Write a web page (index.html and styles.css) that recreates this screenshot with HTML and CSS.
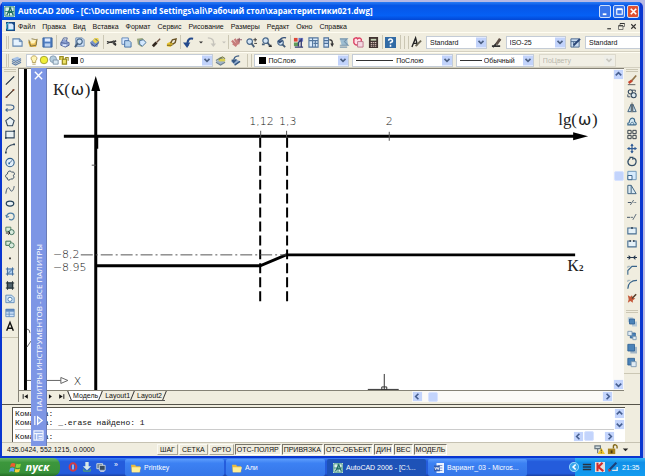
FILE: index.html
```html
<!DOCTYPE html>
<html lang="ru">
<head>
<meta charset="utf-8">
<title>AutoCAD 2006</title>
<link rel="stylesheet" href="styles.css">
</head>
<body>
<div class="window">
  <header class="titlebar">
    <span class="app-icon" data-icon="acad"></span>
    <h1>AutoCAD 2006 - [C:\Documents and Settings\ali\Рабочий стол\характеристики021.dwg]</h1>
    <button class="win-btn" aria-label="Свернуть" data-icon="min"></button>
    <button class="win-btn" aria-label="Развернуть" data-icon="max"></button>
    <button class="win-btn close" aria-label="Закрыть" data-icon="close"></button>
  </header>
  <nav class="menubar">
    <span class="doc-icon" data-icon="doc"></span>
    <button>Файл</button><button>Правка</button><button>Вид</button><button>Вставка</button><button>Формат</button><button>Сервис</button><button>Рисование</button><button>Размеры</button><button>Редакт</button><button>Окно</button><button>Справка</button>
    <span class="spacer"></span>
    <button class="mdi" aria-label="Свернуть документ" data-icon="mdimin"></button>
    <button class="mdi" aria-label="Восстановить документ" data-icon="mdimax"></button>
    <button class="mdi" aria-label="Закрыть документ" data-icon="mdiclose"></button>
  </nav>

  <div class="toolbar standard">
    <i class="grip"></i>
    <div class="tools">
      <button aria-label="Создать" data-icon="new"></button><button aria-label="Открыть" data-icon="open"></button><button aria-label="Сохранить" data-icon="save"></button>
      <i class="sep"></i>
      <button aria-label="Печать" data-icon="print"></button><button aria-label="Просмотр" data-icon="preview"></button><button aria-label="Публикация" data-icon="publish"></button>
      <i class="sep"></i>
      <button aria-label="Вырезать" data-icon="cut"></button><button aria-label="Копировать" data-icon="copy"></button><button aria-label="Вставить" data-icon="paste"></button><button aria-label="Свойства" data-icon="brush"></button><button aria-label="Редактор блоков" data-icon="match"></button>
      <i class="sep"></i>
      <button aria-label="Отменить" data-icon="undo"></button><button class="slim" aria-label="Список отмены" data-icon="drop"></button><button aria-label="Вернуть" data-icon="redo" disabled></button><button class="slim" aria-label="Список возврата" data-icon="dropoff" disabled></button>
      <i class="sep"></i>
      <button aria-label="Панорамирование" data-icon="pan"></button><button aria-label="Зумирование" data-icon="zoompm"></button><button aria-label="Рамка" data-icon="zoomwin"></button><button aria-label="Предыдущий" data-icon="zoomprev"></button>
      <i class="sep"></i>
      <button aria-label="Окно свойств" data-icon="props"></button><button aria-label="Центр управления" data-icon="center"></button><button aria-label="Палитры" data-icon="palettes"></button><button aria-label="Подшивки" data-icon="sheets"></button><button aria-label="Пометки" data-icon="markup"></button><button aria-label="Калькулятор" data-icon="calc"></button>
      <i class="sep"></i>
      <button aria-label="Справка" data-icon="help"></button>
    </div>
    <i class="sep"></i>
    <i class="grip double"></i>
    <div class="styles">
      <span class="style-icon" data-icon="textstyle"></span>
      <label class="combo"><select aria-label="Стиль текста"><option>Standard</option></select><b data-icon="arrow"></b></label>
      <span class="style-icon" data-icon="dimstyle"></span>
      <label class="combo"><select aria-label="Размерный стиль"><option>ISO-25</option></select><b data-icon="arrow"></b></label>
      <span class="style-icon" data-icon="tablestyle"></span>
      <label class="combo last"><select aria-label="Стиль таблиц"><option>Standard</option></select></label>
    </div>
  </div>

  <div class="toolbar layers">
    <i class="grip"></i>
    <button aria-label="Слои" data-icon="layers"></button>
    <label class="combo layer"><select aria-label="Слой"><option>0</option></select>
      <span class="layer-state"><i data-icon="bulb"></i><i data-icon="sun"></i><i data-icon="freeze"></i><i data-icon="lock"></i><i class="swatch"></i></span><b data-icon="arrow"></b></label>
    <button aria-label="Сделать текущим" data-icon="layercur"></button>
    <button aria-label="Предыдущее состояние" data-icon="layerprev"></button>
    <i class="grip double"></i>
    <label class="combo color"><select aria-label="Цвет"><option>ПоСлою</option></select><span class="layer-state"><i class="swatch"></i></span><b data-icon="arrow"></b></label>
    <label class="combo ltype"><select aria-label="Тип линии"><option>ПоСлою</option></select><span class="line"></span><b data-icon="arrow"></b></label>
    <label class="combo weight"><select aria-label="Вес линии"><option>Обычный</option></select><span class="line short"></span><b data-icon="arrow"></b></label>
    <label class="combo plot"><select aria-label="Стиль печати" disabled><option>ПоЦвету</option></select><b data-icon="arrowoff"></b></label>
  </div>

  <main class="workspace">
    <aside class="side">
      <i class="grip flat"></i>
      <button aria-label="Отрезок" data-icon="line"></button><button aria-label="Прямая" data-icon="xline"></button><button aria-label="Полилиния" data-icon="pline"></button><button aria-label="Многоугольник" data-icon="polygon"></button><button aria-label="Прямоугольник" data-icon="rect"></button><button aria-label="Дуга" data-icon="arc"></button><button aria-label="Круг" data-icon="circle"></button><button aria-label="Облако" data-icon="cloud"></button><button aria-label="Сплайн" data-icon="spline"></button><button aria-label="Эллипс" data-icon="ellipse"></button><button aria-label="Эллиптическая дуга" data-icon="earc"></button><button aria-label="Вставить блок" data-icon="insert"></button><button aria-label="Создать блок" data-icon="block"></button><button aria-label="Точка" data-icon="point"></button><button aria-label="Штриховка" data-icon="hatch"></button><button aria-label="Градиент" data-icon="gradient"></button><button aria-label="Область" data-icon="region"></button><button aria-label="Таблица" data-icon="table"></button><button aria-label="Текст" data-icon="mtext"></button>
    </aside>
    <section class="document">
      <div class="view">
        <svg class="drawing" viewBox="19 69 596 321" preserveAspectRatio="xMinYMin meet" role="img" aria-label="График K(ω) от lg(ω)">
          <path d="M25.500 69V391" stroke="#000" stroke-width="3"/>
          <g stroke="#000" fill="none">
            <path d="M96 90V392M64 136.500H578" stroke-width="3"/>
            <path d="M97.500 137V149" stroke-width="2"/>
            <path d="M97 266.500H261L287 255.500H577" stroke-width="3"/>
            <path d="M261 138V303M288 138V303" stroke-width="2" stroke-dasharray="10 4"/>
            <path d="M81 255.500H287" stroke="#555" stroke-dasharray="12 3 2 3"/>
            <path d="M261.500 131V137M287.500 131V137M390.500 132V141M92 165.500H96" stroke="#555"/>
            <path d="M385.500 375V391M369 390.500H400" stroke="#333"/>
            <path d="M383 388h5v3h-5z" stroke="#333"/>
            <path d="M27 381.500H61M61 378.500L68 381.500L61 384.500ZM27 330q3 0 3 4M27 348l4-6" stroke="#666"/>
          </g>
          <path d="M96 76l4.500 15h-9zM590 136.500l-15 4v-8z"/>
          <g class="serif"><text x="53" y="95">К(</text><text x="71" y="95" class="omega">ω</text><text x="85" y="95">)</text><text x="560" y="125">lg(</text><text x="580" y="125" class="omega">ω</text><text x="594" y="125">)</text><text x="569" y="272">К</text><text x="581" y="272" class="sub">2</text></g>
          <g class="cad"><text x="250" y="125">1,12</text><text x="280" y="125">1,3</text><text x="387" y="125">2</text><text x="53" y="259">−8,2</text><text x="53" y="272">−8.95</text><text x="74" y="386">X</text></g>
        </svg>
        <div class="vscroll"><button aria-label="Вверх" data-icon="up"></button><i class="thumb"></i><button aria-label="Вниз" data-icon="down"></button></div>
      </div>
      <div class="tabs">
        <button aria-label="Первый" data-icon="first"></button><button class="mid" aria-label="Назад" data-icon="last"></button><button aria-label="Вперед" data-icon="next"></button><button aria-label="Последний" data-icon="last"></button>
        <button class="tab active">Модель</button><button class="tab">Layout1</button><button class="tab">Layout2</button>
        <span class="spacer"></span>
        <div class="hscroll"><button aria-label="Влево" data-icon="left"></button><i class="thumb"></i><span class="spacer"></span><button aria-label="Вправо" data-icon="right"></button></div>
      </div>
    </section>
    <aside class="side right">
      <i class="grip flat"></i>
      <button aria-label="Стереть" data-icon="erase"></button><button aria-label="Копировать объект" data-icon="mcopy"></button><button aria-label="Зеркало" data-icon="mirror"></button><button aria-label="Подобие" data-icon="offset"></button><button aria-label="Массив" data-icon="array"></button><button aria-label="Перенести" data-icon="move"></button><button aria-label="Повернуть" data-icon="rotate"></button><button aria-label="Масштаб" data-icon="scale"></button><button aria-label="Растянуть" data-icon="stretch"></button><button aria-label="Обрезать" data-icon="trim"></button><button aria-label="Удлинить" data-icon="extend"></button><button aria-label="Разорвать в точке" data-icon="breakpt"></button><button aria-label="Разорвать" data-icon="break"></button><button aria-label="Соединить" data-icon="join"></button><button aria-label="Фаска" data-icon="chamfer"></button><button aria-label="Сопряжение" data-icon="fillet"></button><button aria-label="Расчленить" data-icon="explode"></button>
      <i class="grip flat order"></i>
      <button aria-label="На передний план" data-icon="front"></button><button aria-label="На задний план" data-icon="back"></button><button aria-label="Перед объектом" data-icon="above"></button><button aria-label="За объектом" data-icon="under"></button>
    </aside>
  </main>

  <section class="command">
    <div class="log">
      <p>Команда:</p>
      <p>Команда: _.erase найдено: 1</p>
      <label class="prompt">Команда:<input type="text" aria-label="Командная строка"></label>
    </div>
    <div class="cmd-scroll">
      <button aria-label="Вверх" data-icon="up"></button><button aria-label="Вниз" data-icon="down"></button>
      <div class="cmd-h"><button aria-label="Влево" data-icon="left"></button><i class="thumb"></i><span class="spacer"></span><button aria-label="Вправо" data-icon="right"></button></div>
    </div>
  </section>

  <footer class="status">
    <output>435.0424, 552.1215, 0.0000</output>
    <button>ШАГ</button><button>СЕТКА</button><button>ОРТО</button><button class="on">ОТС-ПОЛЯР</button><button class="on">ПРИВЯЗКА</button><button class="on">ОТС-ОБЪЕКТ</button><button class="on">ДИН</button><button class="on">ВЕС</button><button class="on">МОДЕЛЬ</button>
    <span class="spacer"></span>
    <span class="tray-icons"><i data-icon="warn"></i><i data-icon="padlock"></i><i data-icon="menuarrow"></i></span>
  </footer>

  <section class="palette" aria-label="Палитры инструментов">
    <button aria-label="Закрыть палитру" data-icon="palclose"></button>
    <h2>ПАЛИТРЫ ИНСТРУМЕНТОВ - ВСЕ ПАЛИТРЫ</h2>
    <button aria-label="Автоскрытие" data-icon="autohide"></button>
    <button aria-label="Свойства палитры" data-icon="palprops"></button>
  </section>
</div>

<nav class="taskbar">
  <button class="start"><i data-icon="flag"></i>пуск</button>
  <div class="quick"><button aria-label="Opera" data-icon="opera"></button><button aria-label="Загрузки" data-icon="dl"></button><button aria-label="Рабочий стол" data-icon="desk"></button><span>»</span></div>
  <button class="task"><i data-icon="folder"></i>Printkey</button>
  <button class="task"><i data-icon="folder"></i>Али</button>
  <button class="task current"><i data-icon="acad"></i>AutoCAD 2006 - [C:\...</button>
  <button class="task"><i data-icon="word"></i>Вариант_03 - Micros...</button>
  <div class="tray"><i data-icon="expand"></i><i data-icon="kbd"></i><i data-icon="kav"></i><i data-icon="pen"></i><time>21:35</time></div>
</nav>
<script src="icons.js"></script>
</body>
</html>
```
FILE: icons.js
```js
// Icon artwork on a 12x12 grid, injected into every [data-icon] element.
const s = (d, c = '#26394f', w = 1, f = 'none') =>
  `<path d="${d}" fill="${f}" stroke="${c}" stroke-width="${w}"/>`;
const f = (d, c) => `<path d="${d}" fill="${c}"/>`;
const scrollBox = f('M1 1h10v10H1z', '#c3d4fc');
const lens = (x, y) => `<circle cx="${x}" cy="${y}" r="3" fill="#d3e4f4" stroke="#4b6a8c" stroke-width="1.300"/>`;

const icons = {
  acad: f('M0 0h12v12H0z', '#dff1ea') + s('M1 1h10v10H1zM1 6h10M6 1v10', '#2c8576') + s('M3 10L7 2l3 8M4 7h5', '#1d6b60', 1.4),
  doc: f('M0 0h12v12H0z', '#174a87') + f('M3 2h5l2 2v6H3z', '#d9ecff') + s('M1 9V3l3-2M2 10h6', '#4fc3d9', 1.5),
  min: s('M3 9h4', '#fff', 2),
  max: s('M3 3.500h6v5.500H3z', '#fff', 1.2) + s('M3 3.500h6', '#fff', 2),
  close: s('M3 3l6 6M9 3l-6 6', '#fff', 1.8),
  mdimin: s('M3 9h5', '#333', 1.5),
  mdimax: s('M4 5V2h6v4H8M2 5h6v5H2z', '#555') + s('M2 5h6M4 2h6', '#333', 1.5),
  mdiclose: s('M3 3l6 6M9 3l-6 6', '#333', 1.5),
  new: s('M1 2h7l3 3v5H1z', '#6286b0', 1.2, '#e6f3ff') + s('M8 2v3h3', '#6286b0'),
  open: f('M1 5h7l3-3-1 9H3z', '#e8bd55') + s('M2 3l2 7 6-1 1-7M5 2l5 1', '#7b6c38') + f('M5 3h5l-2 4H4z', '#fff3bb'),
  save: f('M1 1h10v10H1z', '#4d7cc0') + f('M3 1h6v4H3z', '#dceaff') + f('M3 7h6v4H3z', '#bcd3f1') + s('M1 1h10v10H1z', '#38639e'),
  print: f('M2 5l4-3 4 3 1 4-4 2-5-2z', '#91a5d4') + s('M3 5l2-4h4l-1 4M2 6v3l5 2 4-2V6L7 7z', '#495f98') + f('M4 8h4v2H4z', '#dce8ff'),
  preview: s('M2 1h7l2 2v7H2z', '#6486b0', 1, '#dcecff') + lens(6, 5) + s('M4 7L1 11', '#475e78', 2),
  publish: f('M1 6l5-4 5 3-2 6-6-1z', '#7892c8') + f('M6 1h4l1 3-4 3-3-3z', '#ecd555') + s('M2 7l4 3 5-4M7 2l3 3', '#3e5278'),
  cut: s('M1 5l10 2M1 7l8-3', '#333', 1.2) + s('M8 6l3-2M8 7l3 2', '#333', 1.8),
  copy: s('M1 1h7v7H1z', '#5e83b8', 1, '#dbeaff') + s('M4 4h5l2 2v5H4z', '#3e6ba3', 1, '#b8d4ee'),
  paste: f('M1 2l6-1 4 5-5 5-4-3z', '#9aa67e') + s('M4 4l4-1 3 3-4 4-3-2z', '#4c749f', 1, '#d4e9ff'),
  brush: s('M2 10l4-4', '#31271f', 3) + s('M6 6l4-4', '#6c5141', 1.5),
  match: f('M1 7l4-2 3 2-3 4-4-1z', '#e8c430') + s('M5 7l2-4 4-1-1 4-3 2', '#695325', 1.5) + s('M1 9h6', '#6a5720'),
  undo: s('M11 2C7 1 4 3 5 10', '#244a8c', 2.2) + f('M0 6h8l-3.500 6z', '#244a8c'),
  redo: s('M2 1c6 0 7 4 6 8', '#c6c4bc', 1.5) + f('M5 7h6l-3 4z', '#c6c4bc'),
  drop: f('M2 5h8l-4 4z', '#333'), dropoff: f('M2 5h8l-4 4z', '#c6c4bc'),
  pan: s('M1 4l5 5M4 2l4 6M2 7l4 3M8 2v6', '#c77d7b', 2.5) + s('M9 1v5M7 3h5', '#8b5867'),
  zoompm: lens(4, 5) + s('M6 7l3 4', '#475e78', 2) + s('M8 3h4M10 1v4M9 7h3', '#333'),
  zoomwin: lens(5, 4) + s('M7 6l3 4M1 8h3', '#475e78', 2) + f('M8 11h4l-1-3z', '#333'),
  zoomprev: lens(5, 6) + s('M7 8l3 3', '#475e78', 2) + s('M11 1C7 0 4 2 4 5M2 4l2 2 3-2', '#344f77', 1.5),
  props: f('M1 1h4v4H1z', '#dc4638') + f('M6 1h5v4H6z', '#6b76c4') + f('M1 6h5v4H1z', '#5f9a59') + s('M6 10V6l3-3v8M2 11h9', '#333c75', 1.5),
  center: s('M1 1h10v10H1zM5 1v10M1 4h10M6 7h5M8 4v7', '#54779e', 1.2, '#dcecfb'),
  palettes: s('M1 1h5v10H1zM1 4h5M1 7h5', '#4d719a', 1.2, '#d3e5fa') + s('M7 3c4 0 3 3 3 5', '#333', 1.5) + f('M8 7h4l-2 4z', '#333'),
  sheets: f('M2 2h8l1 7H4z', '#9ebdd1') + s('M2 2h8l-3 3 4 4H2M2 11h8', '#7896ad', 1.2),
  markup: s('M1 4c-1-3 3-4 4-2 2-2 5 0 4 2 1 3-1 5-3 4-3 2-6-1-5-4z', '#dc4264', 1.5, '#ffe1e8') + s('M5 5h6v6H5z', '#bc7288', 1, '#f5d8e2'),
  calc: f('M1 0h10v12H1z', '#423431') + f('M3 2h6v2H3z', '#c7d4b6') + s('M3 6h6M3 8h6M3 10h6', '#f1d6d0', 1) + s('M5 5v6M7 5v6', '#423431', .8),
  help: f('M0 0h12v12H0z', '#326ba5') + s('M4 4c0-3 5-2 4 1L6 6v1M6 8.500v2', '#fff', 1.7),
  textstyle: s('M1 11L5 1l2 8M3 7h4', '#222', 1.5) + s('M5 10l6-6', '#6a6552', 2),
  dimstyle: s('M1 10h9M2 11l8-8', '#333', 1.8) + s('M6 8l4-6', '#5e5047', 3),
  tablestyle: s('M1 2h9v9H1zM1 5h9M4 5v6', '#49688f', 1, '#c9dcef') + s('M4 9l7-7', '#294575', 2),
  arrow: f('M0 0h12v12H0z', '#c2d3fb') + s('M3 4l3 3 3-3', '#4d6185', 2),
  arrowoff: f('M0 0h12v12H0z', '#eeeee8') + s('M3 4l3 3 3-3', '#c9c8c0', 2),
  layers: f('M1 4l6-2 4 2-6 3z', '#a6c2e7') + s('M1 5l4 2 6-3M1 7l4 2 6-3M1 9l4 2 6-3', '#5e7ea8', 1.2),
  bulb: s('M4 7C1 4 3 1 6 1s5 3 2 6v2H4zM4 11h4', '#ae984f', 1, '#fff5b4'),
  sun: '<circle cx="6" cy="6" r="4.500" fill="#f1ef38" stroke="#979629"/>',
  freeze: '<circle cx="5" cy="5" r="4" fill="#b6cddd" stroke="#8197ab"/>' + s('M5 6h6v5H5z', '#7189a0', 1, '#dbe9f2'),
  lock: s('M1 6V2h4v4M4 5h5v6H4z', '#998c20', 1.5, '#efe46a') + s('M8 5V3h3v4', '#998c20', 1.3),
  layercur: f('M1 7l5-3 5 3-5 4z', '#9fb3cb') + s('M1 8l5 3 5-3M1 6l5-3 5 3', '#6f8290', 1.2) + f('M4 4h7v3H4z', '#d9cf51') + s('M4 5l4-3 3 2', '#777c41', 1.2),
  layerprev: f('M1 7l5-3 5 3-5 4z', '#93add0') + s('M10 1C5 1 4 3 4 7M2 5l2 3 3-3M5 11l6-4', '#35567f', 1.5),
  line: s('M1 11L11 1', '#1c2a38', 1.3),
  xline: s('M1 11L11 1', '#33281f', 1.3) + f('M1 9h2v2H1zM9 1h2v2H9z', '#8b4a32'),
  pline: s('M1 3h6c5 0 5 5 0 6H2M3 7L1 9l2 2', '#41658d', 1.3),
  polygon: s('M6 1l5 4-2 6H3L1 5z', '#31475c', 1.3, '#e9f1f3'),
  rect: s('M1 2h10v8H1z', '#31475c', 1.3, '#e9f1f3') + f('M0 9h2v2H0zM10 1h2v2h-2z', '#31475c'),
  arc: s('M1 11C1 5 5 2 11 1', '#31475c', 1.3) + f('M0 10h2v2H0zM10 0h2v2h-2z', '#31475c'),
  circle: '<circle cx="6" cy="6" r="5" fill="#e2effa" stroke="#31608b" stroke-width="1.300"/>' + s('M5 7l4-4', '#2e4f77') + f('M4 6h2v2H4z', '#2866a4'),
  cloud: s('M3 4c0-4 4-4 5-2 4-1 4 3 2 4 2 3-1 5-3 4-2 3-5 1-4-1C0 9 0 5 3 4z', '#31475c', 1.2),
  spline: s('M1 11C2 2 5 3 6 6s4 3 5-4', '#44586d', 1.2),
  ellipse: '<ellipse cx="6" cy="6" rx="4.500" ry="3" fill="#e8f1f5" stroke="#25435a" stroke-width="1.500"/>',
  earc: s('M2 6c1-6 9-5 9 0 0 4-4 5-6 3M1 4l1 3 3-1', '#4c7fa6', 1.4),
  insert: s('M1 2h6v5H1z', '#417353', 1, '#d7ead7') + '<circle cx="8" cy="8" r="3" fill="#d7eadc" stroke="#285f4c"/>' + s('M1 9h5M4 7l2 2-2 2', '#222', 1.2),
  block: s('M1 2h6v5H1z', '#417353', 1.2, '#d7ead7') + '<circle cx="8" cy="7" r="3" fill="#d7eadc" stroke="#3b7256"/>',
  point: f('M5 6h2v2H5z', '#222'),
  hatch: f('M2 2h8v8H2z', '#aecff0') + s('M1 3h10M1 9h10M3 1v10M9 1v10M3 9l6-6', '#446d9c', 1.1),
  gradient: f('M2 2h8v8H2z', '#50636d') + s('M1 3h10M1 9h10M3 1v10M9 1v10', '#28353a', 1.3),
  region: s('M1 2h7l3 3v6H1z', '#5584b4', 1, '#cbe2f7') + '<circle cx="6" cy="7" r="2.500" fill="#fff" stroke="#41739f"/>',
  table: s('M1 2h10v9H1zM1 5h10M5 5v6M1 8h10', '#5e89bd', 1, '#d2e4fa') + f('M1 2h10v2H1z', '#4d7bb6'),
  mtext: s('M2 11L6 1l4 10M3.500 8h5', '#111', 1.7),
  erase: s('M5 7l6-7', '#90744a', 2) + s('M2 9l4-3', '#c8462f', 3) + s('M1 11h9', '#444'),
  mcopy: '<circle cx="4" cy="4" r="2.500" fill="none" stroke="#31475c" stroke-width="1.300"/><circle cx="8" cy="8" r="3" fill="#dce9ee" stroke="#31475c" stroke-width="1.300"/>' + s('M6 2h4v2M1 7v3h3'),
  mirror: s('M5 2v9H1zM7 2v9h4z', '#44647f', 1.2, '#d8e8f1') + s('M6 0v12', '#333', .8),
  offset: s('M1 10V8c2 0 2-1 2-3 2-5 7-3 6 1 2 1 3 4 1 4z', '#3d6b8e', 1.3, '#d4e7f1') + s('M4 10c0-3 3-4 4-2v2', '#3d6b8e'),
  array: s('M1 1h4v4H1zM7 1h4v4H7zM1 7h4v4H1zM7 7h4v4H7z', '#38434c', 1.2),
  move: s('M6 1v10M1 6h10', '#315d96', 1.5) + f('M6 0l2 3H4zM6 12l2-3H4zM0 6l3-2v4zM12 6L9 4v4z', '#315d96'),
  rotate: s('M4 2c-5 3-3 9 2 9s7-7 2-9M3 1h4v3', '#334f68', 1.5),
  scale: s('M1 1h10v10H1z', '#739bbd', 1.2, '#d6eafc') + s('M1 6h5v5H1z', '#3e678e', 1.2, '#f1f8ff'),
  stretch: s('M1 1h4v10H1zM5 1l6 10H5', '#456884', 1.2, '#dcebf4'),
  trim: s('M1 6h4M8 6h1M10 6h1', '#455769', 1.2) + s('M4 9l4-6', '#455769'),
  extend: s('M0 7h4M5 7h2', '#455769', 1.2) + s('M7 10l4-7', '#455769'),
  breakpt: s('M1 3h10v7H1z', '#476e91', 1.3, '#e5f1f8') + f('M5 2h2v2H5z', '#182c42'),
  break: s('M4 3H1v7h10V3H8', '#476e91', 1.3, '#e5f1f8') + f('M3 2h2v2H3zM7 2h2v2H7z', '#182c42'),
  join: s('M0 6h12', '#26394f', 1.2) + f('M5 6L2 3v6zM7 6l3-3v6z', '#26394f'),
  chamfer: s('M1 11V6l5-5h6', '#39658b', 1.3) + s('M1 3V1h3', '#8da4b4'),
  fillet: s('M1 11C1 5 5 1 12 1', '#39658b', 1.5) + s('M1 3V1h3', '#8da4b4'),
  explode: f('M1 2l3 2 2-2 1 3 3 1-3 2v3l-3-2-3 2 1-4z', '#c4583a') + s('M6 6l5-5', '#553e2b', 1.8),
  front: f('M1 1h6v6H1zM6 6h6v6H6z', '#b7cbd9') + s('M3 3h6v6H3z', '#2e6295', 1, '#4b83b8'),
  back: s('M4 3h6v6H4z', '#2e6295', 1, '#4b83b8') + s('M1 1h5v5H1zM7 7h4v4H7z', '#7592ac', 1, '#e0ecf4'),
  above: f('M4 4h8v8H4z', '#a4b7c6') + s('M1 1h8v8H1z', '#2e6295', 1, '#4b83b8'),
  under: s('M1 1h8v8H1z', '#2e6295', 1, '#4b83b8') + s('M5 5h6v6H5z', '#7592ac', 1, '#e0ecf4'),
  up: scrollBox + s('M3 7l3-3 3 3', '#465f91', 1.8), down: scrollBox + s('M3 5l3 3 3-3', '#465f91', 1.8),
  left: scrollBox + s('M7 3L4 6l3 3', '#465f91', 1.8), right: scrollBox + s('M5 3l3 3-3 3', '#465f91', 1.8),
  first: s('M2 2v8', '#111', 1.6) + f('M10 2v8L4 6z', '#111'),
  last: s('M10 2v8', '#111', 1.6) + f('M2 2v8l6-4z', '#111'), next: f('M5 2v8l5-4z', '#111'),
  tabedge: s('M1 0l4 12h0', '#333', 1.2),
  warn: s('M1 2h6v3H1zM4 5v5', '#697881', 1.3, '#d1dce0') + f('M8 4l4 7H4z', '#efc62e') + s('M8 6v2M8 9v1', '#574619', 1),
  padlock: s('M7 5V2c1-2 4-1 4 1v2', '#846a1c', 1.5) + f('M1 5h8v6H1z', '#a6821d') + f('M4 7h2v3H4z', '#4b3a0d'),
  menuarrow: f('M3 5h6l-3 3z', '#222'),
  palclose: s('M2 2l8 8M10 2l-8 8', '#fff', 1.5),
  autohide: s('M2 1v10M5 2v8l5-4z', '#fff', 1.3, '#8faee8'),
  palprops: s('M1 1h10v10H1zM1 4h10M4 4v7M6 7h4M6 9h4', '#f3f7ff', 1.2, '#9ab3eb'),
  flag: f('M1 2q2-2 5 0L5 6Q2 4 0 6z', '#ef5b2f') + f('M7 2q2 1 5 0l-1 4Q8 7 6 6z', '#8bd53d') + f('M0 7q3-2 5 0l-1 4Q2 9-1 11z', '#5ca0ee') + f('M6 7q2 2 5 0l-1 4Q7 12 5 11z', '#f7cf3b'),
  opera: '<ellipse cx="6" cy="6" rx="4" ry="4.500" fill="none" stroke="#d23a43" stroke-width="2.500"/>' + f('M5 3h2v6H5z', '#a9c8ee'),
  dl: f('M4 0h4v5h3l-5 5-5-5h3z', '#d8e8e7') + s('M2 11h8M2 8v3M10 8v3', '#4f9c78', 1.6),
  desk: s('M1 2h7v6H1z', '#dce5e8', 1, '#6b7c8e') + s('M4 4h7v6H4z', '#d8e2e7', 1, '#384b60') + f('M5 11h5v1H5z', '#ddd'),
  folder: f('M0 2h5l1 2h5v7H1z', '#e9bb3f') + f('M1 5h11l-2 6H1z', '#ffef96'),
  word: f('M3 0h9v12H3z', '#edf3ff') + s('M5 3h5M7 6h3M5 9h5', '#6886c4') + f('M0 3h7v7H0z', '#315bb0') + s('M1 5l1 3 1.500-3L5 8l1-3', '#fff', 1),
  expand: '<circle cx="6" cy="6" r="6" fill="#38a5ec"/><circle cx="6" cy="6" r="5.500" fill="none" stroke="#a4ddfb"/>' + s('M8 3L5 6l3 3', '#fff', 2),
  kbd: s('M1 3h10M1 6h10M1 9h10', '#283241', 2),
  kav: f('M0 0h12v12H0z', '#e5e0df') + s('M3 1v10M9 1L4 6l6 5', '#d12b2b', 2.5),
  pen: s('M2 9l8-8', '#1d3f78', 2.5) + s('M5 10h6V6', '#e3e8ed', 1.6) + f('M0 8l4 2-3 2z', '#c53939'),
};

document.querySelectorAll('[data-icon]').forEach((el) => {
  el.insertAdjacentHTML('afterbegin',
    `<svg class="icon" viewBox="0 0 12 12" aria-hidden="true">${icons[el.dataset.icon]}</svg>`);
});
```
FILE: styles.css
```css
* { box-sizing: border-box; }
html, body { height: 100%; }
body {
  margin: 0;
  display: flex;
  flex-direction: column;
  overflow: hidden;
  background: #b7b8e4;
  font: 7px/9px "Liberation Sans", sans-serif;
  color: #111;
}
button, select, input { font: inherit; color: inherit; margin: 0; padding: 0; border: 0; background: none; }
button { display: flex; align-items: center; justify-content: center; flex: none; white-space: nowrap; }
h1, h2, p { margin: 0; font-weight: normal; }
i, b { font-style: normal; font-weight: normal; }
.icon { display: block; width: 11px; height: 11px; flex: none; overflow: visible; }
.spacer { flex: 1; }

.window {
  position: relative;
  flex: 1;
  min-height: 0;
  margin: 2px 2px 0 0;
  display: flex;
  flex-direction: column;
  background: #f0eddf;
  border: solid #0a36d0;
  border-width: 0 3px 2px 2px;
  border-radius: 5px 5px 0 0;
}
.titlebar {
  height: 18px;
  flex: none;
  display: flex;
  align-items: center;
  gap: 2px;
  padding: 0 1px 0 2px;
  color: #fff;
  background: linear-gradient(#2b7cf4, #0755e6 20%, #0560f5 75%, #0347d5);
}
.titlebar h1 { flex: 1; margin-left: 1px; font: bold 8px/12px "Open Sans", sans-serif; white-space: nowrap; overflow: hidden; }
.win-btn { width: 12px; height: 13px; background: #3b76ea; border: 1px solid #cfdffa; border-radius: 2px; }
.win-btn.close { background: #df5131; }

.menubar { height: 12px; flex: none; display: flex; align-items: center; gap: 7px; padding-left: 4px; }
.menubar .doc-icon { margin-right: -4px; }
.menubar .icon { width: 9px; height: 9px; }
.menubar .mdi { width: 5px; }
.menubar .mdi:last-child { margin-right: 4px; }

.toolbar { flex: none; display: flex; align-items: center; padding-left: 4px; border-top: 1px solid #fffdf2; border-bottom: 1px solid #d4d0c0; }
.standard { height: 20px; }
.layers { height: 16px; }
.grip { width: 3px; height: 13px; flex: none; border: solid #cbc7b4; border-width: 0 1px; }
.grip.double { width: 5px; margin: 0 4px; }
.standard .double { margin: 0 1px 0 3px; }
.sep { width: 1px; height: 14px; flex: none; background: #cbc7b4; }
.tools { display: flex; align-items: center; gap: 4px; padding-left: 3px; margin-right: 4px; }
.tools .sep { margin: 0 -2px 0 -1px; }
.tools button { width: 11px; }
.tools .slim { width: 5px; margin-right: -1px; }
.tools .slim .icon { width: 6px; height: 6px; }
.styles { flex: 1; display: flex; align-items: center; gap: 3px; }
.style-icon { margin: 0 1px; }

.combo { position: relative; display: flex; height: 13px; background: #fff; border: 1px solid #c4ccd6; }
.combo select { appearance: none; width: 100%; padding-left: 3px; background: transparent; line-height: 11px; opacity: 1; }
.combo b { position: absolute; right: 0; top: 0; }
.combo b .icon { width: 10px; height: 11px; }
.styles .combo { flex: 1; }
.styles .combo.last { flex: 0 1 55px; border-right: 0; }
.layers > button { width: 15px; }
.layers .layer { flex: 190; margin-left: 2px; }
.layer select { padding-left: 53px; }
.layer-state { position: absolute; left: 2px; top: 0; height: 11px; display: flex; align-items: center; pointer-events: none; }
.layer-state .icon { width: 10px; height: 10px; }
.swatch { width: 7px; height: 7px; background: #000; margin: 0 2px; }
.layers .double { margin: 0 2px 0 4px; }
.layers .color { flex: 95; margin-right: 3px; }
.color select { padding-left: 13px; }
.layers .ltype { flex: 101; margin-right: 3px; }
.ltype select { padding-left: 43px; }
.layers .weight { flex: 78; margin-right: 5px; }
.weight select { padding-left: 27px; }
.line { position: absolute; left: 3px; top: 5px; width: 37px; height: 1px; background: #333; }
.line.short { width: 22px; }
.layers .plot { flex: 77; margin-right: 24px; background: #f1efe5; color: #bab8ad; border-color: #dcd9cc; }
.layers .plot b { right: 1px; }

.workspace { flex: 1; min-height: 0; display: flex; }
.side { width: 16px; height: 270px; flex: none; display: flex; flex-direction: column; align-items: center; justify-content: space-between; padding: 1px 0 5px; border-bottom: 1px solid #cbc7b4; }
.side.right { height: 306px; }
.side .icon { width: 10px; }
.grip.flat { width: 12px; height: 3px; border-width: 1px 0; }
.side.right .order { margin-top: 4px; }
.document { flex: 1; min-width: 0; display: flex; flex-direction: column; border: solid #858276; border-width: 1px 0 0 1px; }
.view { flex: 1; min-height: 0; display: flex; background: #fff; }
.drawing { flex: 1; min-width: 0; height: 100%; display: block; }
.serif { font: 17px "Liberation Serif", serif; fill: #222; }
.serif .omega { font: 16px "DejaVu Sans", sans-serif; }
.serif .sub { font-size: 9px; font-weight: bold; }
.cad { font: 11px "DejaVu Sans", sans-serif; font-weight: 200; fill: #111; }
.vscroll { width: 11px; flex: none; display: flex; flex-direction: column; align-items: center; background: #fbfaf7; }
.vscroll button:last-child { margin-top: auto; }
.thumb { width: 10px; height: 10px; flex: none; background: #c3d4fc; border: 1px solid #d8e3ff; border-radius: 2px; }
.vscroll .thumb { margin-top: 91px; }
.tabs { height: 12px; flex: none; display: flex; border-top: 1px solid #858276; }
.tabs > button { width: 12px; }
.tabs > button .icon { width: 7px; height: 7px; }
.tabs > .tab { position: relative; width: auto; height: 10px; padding: 0 3px 0 4px; border-bottom: 1px solid #555; }
.tabs > .active { margin-left: 2px; background: #fff; }
.tab::after, .tab.active::before { content: ""; position: absolute; top: 0; bottom: 0; width: 1px; background: #333; }
.tab::after { right: 0; transform: skewX(-22deg); }
.tab.active::before { left: 0; transform: skewX(22deg); }
.hscroll { width: 201px; display: flex; align-items: center; background: #fbfaf7; margin-right: 11px; }
.hscroll .thumb { margin-left: 5px; }

.command { height: 38px; flex: none; display: flex; margin-top: 2px; padding: 0 15px 0 10px; border-top: 1px solid #55534a; }
.log { flex: 1; margin-top: 2px; padding: 1px 0 0 2px; border: solid #55534a; border-width: 1px 0 0 1px; background: #fff; font: 8px/9px "Liberation Mono", monospace; }
.prompt { display: flex; border-top: 1px solid #ccc; margin-top: 2px; padding-top: 2px; }
.prompt input { flex: 1; min-width: 0; }
.cmd-scroll { width: 11px; flex: none; margin-top: 2px; background: #fff; border-top: 1px solid #55534a; display: flex; flex-direction: column; position: relative; }
.cmd-h { width: 42px; display: flex; position: absolute; right: 10px; bottom: 0; }

.status { height: 14px; flex: none; display: flex; align-items: center; border-top: 1px solid #c6c2b2; padding-left: 5px; gap: 1px; }
.status output { flex: 0 0 149px; }
.status button { height: 11px; padding: 0 2px; border: 1px solid #fff; border-color: #faf9f3 #aaa696 #aaa696 #faf9f3; }
.status .on { padding: 0 1px; border-color: #77746a #fff #fff #77746a; }
.tray-icons { display: flex; gap: 2px; margin-right: 9px; }

.palette { position: absolute; left: 29px; top: 66px; bottom: 10px; width: 16px; display: flex; flex-direction: column; align-items: center; gap: 4px; padding: 2px 0 5px; color: #fff; background: #7d96e5; border-right: 1px solid #6a7cb8; }
.palette h2 { margin-top: auto; writing-mode: vertical-rl; transform: rotate(180deg); font: 8px/12px "Open Sans", sans-serif; white-space: nowrap; }

.taskbar { height: 18px; flex: none; display: flex; align-items: stretch; color: #fff; background: linear-gradient(#3c83f3, #245cdc 20%, #245cdc 85%, #1941a5); }
.taskbar .start { width: 60px; gap: 4px; font: italic bold 11px/14px "Open Sans", sans-serif; background: linear-gradient(#68b668, #3c973c 25%, #38913a 80%, #246d26); border-radius: 0 7px 7px 0; }
.quick { width: 65px; display: flex; gap: 4px; align-items: center; padding-left: 8px; }
.quick .icon { width: 10px; height: 10px; }
.quick span { margin: -6px 0 0 4px; }
.task { flex: 0 1 99px; min-width: 0; justify-content: flex-start; gap: 3px; padding-left: 6px; margin: 1px 2px 0 0; background: linear-gradient(#5c9cfb, #3c81f3 25%, #3576e8); border-radius: 2px; }
.task .icon { width: 10px; height: 10px; }
.task.current { background: #1e52b7; }
.tray { margin-left: auto; width: 70px; display: flex; align-items: center; gap: 3px; background: linear-gradient(#37b5f5, #1290e8 25%, #129cf0); }
.tray .icon { width: 10px; height: 10px; }
.tray i:first-child { margin-left: -6px; }
.tray time { margin-left: 1px; }
```
